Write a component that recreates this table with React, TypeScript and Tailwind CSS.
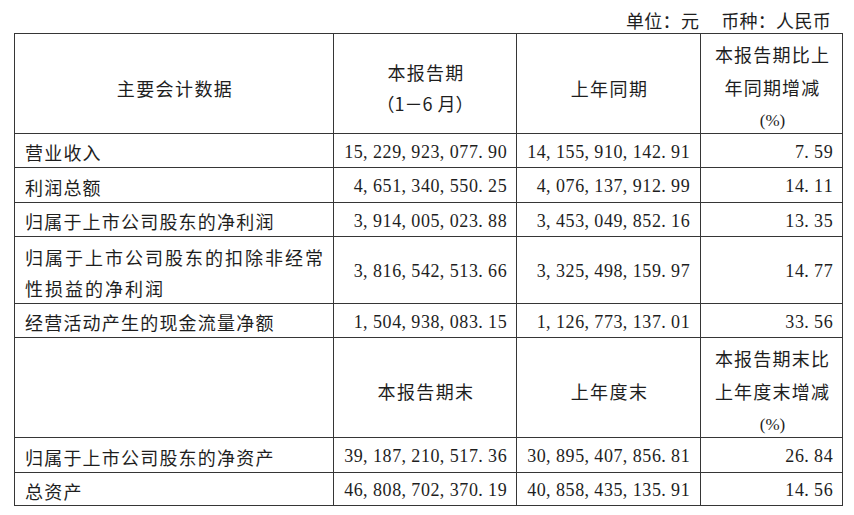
import React from "react";

const CJK = "font-['Noto_Sans_CJK_SC',sans-serif]";

function Num({ v }: { v: string }) {
  return (
    <span className="inline-flex font-['Liberation_Serif',serif] text-[18px] leading-[22px]">
      {v.split("").map((c, i) => (
        <span
          key={i}
          className={
            c === "," || c === "."
              ? "inline-block w-[9.6px] text-left"
              : "inline-block w-[9.6px] text-center"
          }
        >
          {c}
        </span>
      ))}
    </span>
  );
}

function Label({ children }: { children: React.ReactNode }) {
  return (
    <div className={`bg-white flex items-center pl-[10px] pt-[3px] text-[18px] leading-[24px] tracking-[1.2px] text-[#1e1e1e] ${CJK}`}>
      {children}
    </div>
  );
}

function NumCell({ v }: { v: string }) {
  return (
    <div className="bg-white flex items-center justify-end pr-[9px] pt-[2px] text-[#1e1e1e]">
      <Num v={v} />
    </div>
  );
}

function NumCell2({ v }: { v: string }) {
  return (
    <div className="bg-white flex items-center justify-end pr-[10px] pt-[2px] text-[#1e1e1e]">
      <Num v={v} />
    </div>
  );
}

const rows1 = [
  ["营业收入", "15,229,923,077.90", "14,155,910,142.91", "7.59"],
  ["利润总额", "4,651,340,550.25", "4,076,137,912.99", "14.11"],
  ["归属于上市公司股东的净利润", "3,914,005,023.88", "3,453,049,852.16", "13.35"],
];

export default function App() {
  return (
    <div className="w-[854px] h-[515px] bg-white pl-[14px] pr-[11px] overflow-hidden">
      <div
        className={`h-[33px] flex justify-end items-start pt-[8px] pr-[12px] text-[18px] leading-[24px] tracking-[0.3px] text-[#1e1e1e] ${CJK}`}
      >
        <span>单位：元</span>
        <span className="ml-[22px]">币种：人民币</span>
      </div>
      <div className="grid grid-cols-[318px_182px_183px_141px] grid-rows-[99px_33px_34px_33px_66px_33px_99px_34px_32px] gap-px bg-[#363636] border border-[#363636]">
        {/* header */}
        <div className={`bg-white flex items-center justify-center pt-[9px] pl-[2px] text-[18px] tracking-[1.4px] text-[#1e1e1e] ${CJK}`}>
          主要会计数据
        </div>
        <div className={`bg-white flex flex-col items-center justify-center pt-[8px] text-[18px] leading-[31px] text-[#1e1e1e] ${CJK}`}>
          <span className="tracking-[1.2px] pl-[2px]">本报告期</span>
          <span>
            （1－6<span className="inline-block w-[5px]" />月）
          </span>
        </div>
        <div className={`bg-white flex items-center justify-center pt-[9px] pl-[2px] text-[18px] tracking-[1.4px] text-[#1e1e1e] ${CJK}`}>
          上年同期
        </div>
        <div className={`bg-white flex flex-col items-center justify-center pt-[8px] pl-[2px] text-[18px] leading-[33px] tracking-[1.2px] text-[#1e1e1e] ${CJK}`}>
          <span>本报告期比上</span>
          <span>年同期增减</span>
          <span className="font-['Liberation_Serif',serif] text-[17px] tracking-normal">(%)</span>
        </div>

        {rows1.map((r) => (
          <React.Fragment key={r[0]}>
            <Label>{r[0]}</Label>
            <NumCell v={r[1]} />
            <NumCell2 v={r[2]} />
            <NumCell v={r[3]} />
          </React.Fragment>
        ))}

        <div className={`bg-white flex flex-col justify-center pl-[10px] pt-[5px] text-[18px] leading-[31px] tracking-[2px] text-[#1e1e1e] ${CJK}`}>
          <span>归属于上市公司股东的扣除非经常</span>
          <span>性损益的净利润</span>
        </div>
        <NumCell v="3,816,542,513.66" />
        <NumCell2 v="3,325,498,159.97" />
        <NumCell v="14.77" />

        <Label>经营活动产生的现金流量净额</Label>
        <NumCell v="1,504,938,083.15" />
        <NumCell2 v="1,126,773,137.01" />
        <NumCell v="33.56" />

        <div className="bg-white" />
        <div className={`bg-white flex items-center justify-center pt-[8px] pl-[2px] text-[18px] tracking-[1.4px] text-[#1e1e1e] ${CJK}`}>
          本报告期末
        </div>
        <div className={`bg-white flex items-center justify-center pt-[8px] pl-[2px] text-[18px] tracking-[1.4px] text-[#1e1e1e] ${CJK}`}>
          上年度末
        </div>
        <div className={`bg-white flex flex-col items-center justify-center pt-[8px] pl-[2px] text-[18px] leading-[33px] tracking-[1.2px] text-[#1e1e1e] ${CJK}`}>
          <span>本报告期末比</span>
          <span>上年度末增减</span>
          <span className="font-['Liberation_Serif',serif] text-[17px] tracking-normal">(%)</span>
        </div>

        <Label>归属于上市公司股东的净资产</Label>
        <NumCell v="39,187,210,517.36" />
        <NumCell2 v="30,895,407,856.81" />
        <NumCell v="26.84" />

        <Label>总资产</Label>
        <NumCell v="46,808,702,370.19" />
        <NumCell2 v="40,858,435,135.91" />
        <NumCell v="14.56" />
      </div>
    </div>
  );
}
